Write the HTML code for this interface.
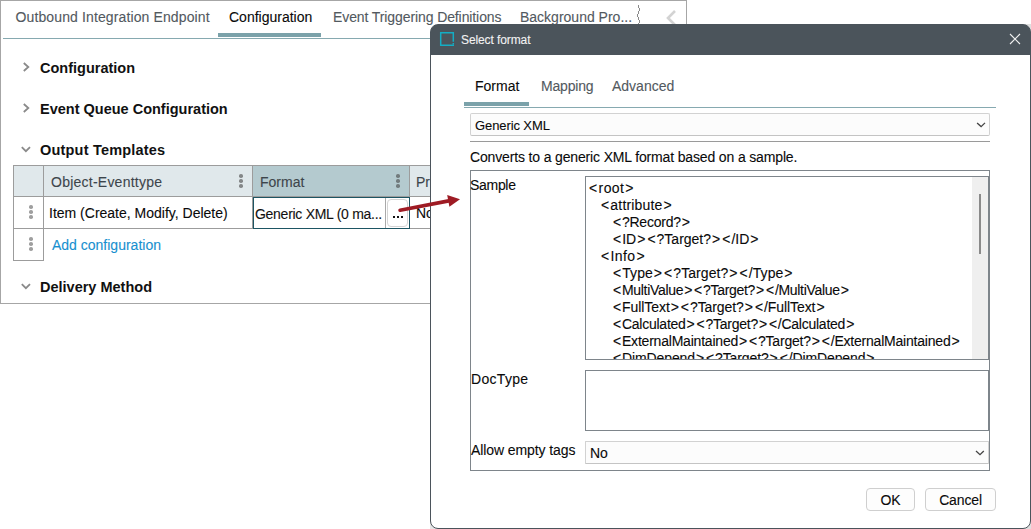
<!DOCTYPE html>
<html><head><meta charset="utf-8">
<style>
*{margin:0;padding:0;box-sizing:border-box}
html,body{width:1031px;height:529px;overflow:hidden;background:#fff;font-family:"Liberation Sans",sans-serif;font-size:14px;color:#0a0a0a}
.t{-webkit-text-stroke:0.1px currentColor}
.t.b{-webkit-text-stroke:0}
.a{position:absolute}
.t{position:absolute;white-space:pre;line-height:16px;height:16px}
.b{font-weight:bold;font-size:14.5px;color:#111}
.panel{left:0;top:0;width:687px;height:304px;border:1px solid #a6a6a6}
.tabi{color:#525960}
i{font-style:normal;padding:0 1px}
.kb{position:absolute;width:3.6px;height:3.6px;border-radius:50%;background:rgba(70,70,70,0.6)}
</style></head><body>
<!-- main panel -->
<div class="a panel"></div>
<div class="t tabi" style="left:15.5px;top:9px;letter-spacing:0.12px">Outbound Integration Endpoint</div>
<div class="t" style="left:229px;top:9px">Configuration</div>
<div class="t tabi" style="left:333px;top:9px;letter-spacing:-0.1px">Event Triggering Definitions</div>
<div class="t tabi" style="left:520px;top:9px">Background Pro...</div>
<svg class="a" style="left:0;top:0" width="700" height="30" shape-rendering="crispEdges"><path d="M638.5 5V8 M639.5 8V11 M638.5 11V14 M637.5 14V17 M638.5 17V20 M639.5 20V23 M638.5 23V24" stroke="#8a8a8a" stroke-width="1" fill="none"/></svg>
<svg class="a" style="left:664px;top:8px" width="16" height="20"><path d="M11 3 L4 10 L11 17" stroke="#d3d3d3" stroke-width="2.6" fill="none"/></svg>
<div class="a" style="left:218px;top:33px;width:103px;height:4px;background:#7ba2aa"></div>
<div class="a" style="left:3px;top:38px;width:683px;height:1px;background:#86a9b0"></div>

<svg class="a" style="left:21px;top:61px" width="12" height="14"><path d="M2.8 2 L7.3 6 L2.8 10" stroke="#8a8a8a" stroke-width="1.8" fill="none"/></svg>
<div class="t b" style="left:40px;top:60px">Configuration</div>
<svg class="a" style="left:21px;top:102px" width="12" height="14"><path d="M2.8 2 L7.3 6 L2.8 10" stroke="#8a8a8a" stroke-width="1.8" fill="none"/></svg>
<div class="t b" style="left:40px;top:101px">Event Queue Configuration</div>
<svg class="a" style="left:19px;top:144px" width="14" height="10"><path d="M2.8 3.2 L6.9 7.2 L11 3.2" stroke="#8a8a8a" stroke-width="1.8" fill="none"/></svg>
<div class="t b" style="left:40px;top:142px;letter-spacing:0.2px">Output Templates</div>
<svg class="a" style="left:19px;top:281px" width="14" height="10"><path d="M2.8 3.2 L6.9 7.2 L11 3.2" stroke="#8a8a8a" stroke-width="1.8" fill="none"/></svg>
<div class="t b" style="left:40px;top:279px">Delivery Method</div>

<!-- table -->
<div class="a" style="left:13px;top:165px;width:418px;height:32px;background:#e0e8eb;border-top:1px solid #9c9c9c;border-bottom:1px solid #9c9c9c"></div>
<div class="a" style="left:253px;top:166px;width:156px;height:30px;background:#b4cacf"></div>
<div class="a" style="left:13px;top:196px;width:418px;height:33px;border-bottom:1px solid #9c9c9c"></div>
<div class="a" style="left:13px;top:165px;width:1px;height:96px;background:#9c9c9c"></div>
<div class="a" style="left:43px;top:165px;width:1px;height:96px;background:#9c9c9c"></div>
<div class="a" style="left:13px;top:260px;width:31px;height:1px;background:#9c9c9c"></div>
<div class="a" style="left:252px;top:165px;width:1px;height:64px;background:#9c9c9c"></div>
<div class="a" style="left:409px;top:165px;width:1px;height:64px;background:#9c9c9c"></div>
<div class="t" style="left:51px;top:174px;color:#3d454b;letter-spacing:0.24px">Object-Eventtype</div>
<div class="t" style="left:260px;top:174px;color:#3d454b">Format</div>
<div class="t" style="left:416px;top:174px;color:#3d454b">Pr</div>
<div class="kb" style="left:239.15px;top:174.10px"></div><div class="kb" style="left:239.15px;top:179.10px"></div><div class="kb" style="left:239.15px;top:184.10px"></div>
<div class="kb" style="left:396.25px;top:174.10px"></div><div class="kb" style="left:396.25px;top:179.10px"></div><div class="kb" style="left:396.25px;top:184.10px"></div>
<div class="kb" style="background:rgba(70,70,70,0.52);left:29.00px;top:205.10px"></div><div class="kb" style="background:rgba(70,70,70,0.52);left:29.00px;top:210.10px"></div><div class="kb" style="background:rgba(70,70,70,0.52);left:29.00px;top:215.10px"></div>
<div class="kb" style="background:rgba(70,70,70,0.52);left:29.00px;top:237.10px"></div><div class="kb" style="background:rgba(70,70,70,0.52);left:29.00px;top:242.10px"></div><div class="kb" style="background:rgba(70,70,70,0.52);left:29.00px;top:247.10px"></div>
<div class="t" style="left:49px;top:205px">Item (Create, Modify, Delete)</div>
<div class="a" style="left:253px;top:197px;width:157px;height:32px;border:1.5px solid #1d5563;background:#fff"></div>
<div class="t" style="left:255px;top:206px;color:#111;letter-spacing:-0.28px">Generic XML (0 ma...</div>
<div class="a" style="left:387px;top:199px;width:21px;height:28px;border:1px solid #d4d4d4;border-radius:4px;background:#fff"></div>
<div class="a" style="left:385px;top:198px;width:1px;height:30px;background:#a9a9a9"></div><div class="a" style="left:392.9px;top:215.9px;width:2.2px;height:2.2px;background:#111"></div><div class="a" style="left:396.9px;top:215.9px;width:2.2px;height:2.2px;background:#111"></div><div class="a" style="left:400.9px;top:215.9px;width:2.2px;height:2.2px;background:#111"></div>
<div class="t" style="left:416px;top:205px">No</div>
<div class="t" style="left:52px;top:237px;color:#1890cf">Add configuration</div>

<!-- dialog -->
<div class="a" style="left:1021px;top:24px;width:10px;height:10px;background:#dedede"></div>
<div class="a" style="left:1021px;top:519px;width:10px;height:10px;background:#dedede"></div>
<div class="a" style="left:430px;top:519px;width:10px;height:10px;background:#e6e6e6"></div>
<div class="a" style="left:430px;top:24px;width:601px;height:505px;border:1px solid #4b545b;border-radius:8px;background:linear-gradient(#4b545b 0,#4b545b 30px,#fff 30px)"></div>
<svg class="a" style="left:436px;top:28px" width="22" height="22"><path d="M18 4.7 H4 M4.7 4 V17.3 H18 M17.3 4 V13.8 M17.3 15 V16.2" stroke="#14adc4" stroke-width="1.5" fill="none"/></svg>
<div class="t" style="left:461px;top:32px;color:#f2f2f2;font-size:12px;letter-spacing:-0.1px">Select format</div>
<svg class="a" style="left:1009px;top:33px" width="12" height="12"><path d="M1 1 L11 11 M11 1 L1 11" stroke="#f0f0f0" stroke-width="1.1"/></svg>

<div class="t" style="left:475px;top:78px">Format</div>
<div class="t tabi" style="left:541px;top:78px;letter-spacing:-0.2px">Mapping</div>
<div class="t tabi" style="left:612px;top:78px">Advanced</div>
<div class="a" style="left:464px;top:102px;width:65px;height:4px;background:#7ba2aa"></div>
<div class="a" style="left:464px;top:107px;width:532px;height:1px;background:#86a9b0"></div>

<div class="a" style="left:470px;top:113px;width:520px;height:23px;border:1px solid #d2d2d2;border-bottom-color:#c4c4c4;border-radius:2px;background:#fcfcfc"></div>
<div class="t" style="left:475px;top:118px;font-size:13px;letter-spacing:-0.1px">Generic XML</div>
<svg class="a" style="left:975px;top:120px" width="12" height="10"><path d="M2.1 2.9 L6.1 6.6 L10 2.9" stroke="#444" stroke-width="1.3" fill="none"/></svg>
<div class="a" style="left:470px;top:141px;width:520px;height:1px;background:#9a9a9a"></div>
<div class="t" style="left:470px;top:149px;letter-spacing:-0.15px">Converts to a generic XML format based on a sample.</div>

<div class="a" style="left:470px;top:170px;width:520px;height:301px;border:1px solid #7e858b"></div>
<div class="t" style="left:470px;top:177px;letter-spacing:-0.3px">Sample</div>
<div class="a" style="left:585px;top:176px;width:404px;height:184px;border:1px solid #7e858b;overflow:hidden;background:#fff">
  <div class="a" style="left:386px;top:0;width:16px;height:182px;background:#efefef"></div>
  <div class="a" style="left:393px;top:17px;width:2px;height:60px;background:#8a8a8a"></div>
  <div class="t" style="left:2px;top:3px;letter-spacing:0.40px"><i>&lt;</i>root<i>&gt;</i></div>
  <div class="t" style="left:14px;top:20px;letter-spacing:0.17px"><i>&lt;</i>attribute<i>&gt;</i></div>
  <div class="t" style="left:26px;top:37px;letter-spacing:-0.24px"><i>&lt;</i>?Record?<i>&gt;</i></div>
  <div class="t" style="left:26px;top:54px;letter-spacing:0.00px"><i>&lt;</i>ID<i>&gt;</i><i>&lt;</i>?Target?<i>&gt;</i><i>&lt;</i>/ID<i>&gt;</i></div>
  <div class="t" style="left:14px;top:71px;letter-spacing:0.40px"><i>&lt;</i>Info<i>&gt;</i></div>
  <div class="t" style="left:26px;top:88px;letter-spacing:0.06px"><i>&lt;</i>Type<i>&gt;</i><i>&lt;</i>?Target?<i>&gt;</i><i>&lt;</i>/Type<i>&gt;</i></div>
  <div class="t" style="left:26px;top:105px;letter-spacing:-0.30px"><i>&lt;</i>MultiValue<i>&gt;</i><i>&lt;</i>?Target?<i>&gt;</i><i>&lt;</i>/MultiValue<i>&gt;</i></div>
  <div class="t" style="left:26px;top:122px;letter-spacing:-0.08px"><i>&lt;</i>FullText<i>&gt;</i><i>&lt;</i>?Target?<i>&gt;</i><i>&lt;</i>/FullText<i>&gt;</i></div>
  <div class="t" style="left:26px;top:139px;letter-spacing:-0.25px"><i>&lt;</i>Calculated<i>&gt;</i><i>&lt;</i>?Target?<i>&gt;</i><i>&lt;</i>/Calculated<i>&gt;</i></div>
  <div class="t" style="left:26px;top:156px;letter-spacing:-0.21px"><i>&lt;</i>ExternalMaintained<i>&gt;</i><i>&lt;</i>?Target?<i>&gt;</i><i>&lt;</i>/ExternalMaintained<i>&gt;</i></div>
  <div class="t" style="left:26px;top:173px;letter-spacing:-0.12px"><i>&lt;</i>DimDepend<i>&gt;</i><i>&lt;</i>?Target?<i>&gt;</i><i>&lt;</i>/DimDepend<i>&gt;</i></div>
</div>
<div class="t" style="left:471px;top:371px;letter-spacing:0.3px">DocType</div>
<div class="a" style="left:585px;top:370px;width:404px;height:61px;border:1px solid #7e858b;background:#fff"></div>
<div class="t" style="left:471px;top:442px;letter-spacing:-0.09px">Allow empty tags</div>
<div class="a" style="left:585px;top:441px;width:404px;height:23px;border:1px solid #d2d2d2;border-bottom-color:#c4c4c4;border-radius:1px;background:#fcfcfc"></div>
<div class="t" style="left:590px;top:445px">No</div>
<svg class="a" style="left:974px;top:448px" width="12" height="10"><path d="M2 3 L6 6.7 L9.8 3" stroke="#444" stroke-width="1.3" fill="none"/></svg>

<div class="a" style="left:866px;top:488px;width:49px;height:23px;border:1px solid #cfcfcf;border-radius:4px;background:#fdfdfd"></div>
<div class="t" style="left:866px;top:492px;width:49px;text-align:center">OK</div>
<div class="a" style="left:925px;top:488px;width:71px;height:23px;border:1px solid #cfcfcf;border-radius:4px;background:#fdfdfd"></div>
<div class="t" style="left:925px;top:492px;width:71px;text-align:center;letter-spacing:-0.15px">Cancel</div>

<!-- arrow -->
<svg class="a" style="left:390px;top:190px" width="80" height="30"><path d="M10.1 20.2 L60 10.6" stroke="#9e1b24" stroke-width="3.7" stroke-linecap="round"/><path d="M57.2 5 L70 9.2 L59.4 16.7 Z" fill="#9e1b24"/></svg>
</body></html>
